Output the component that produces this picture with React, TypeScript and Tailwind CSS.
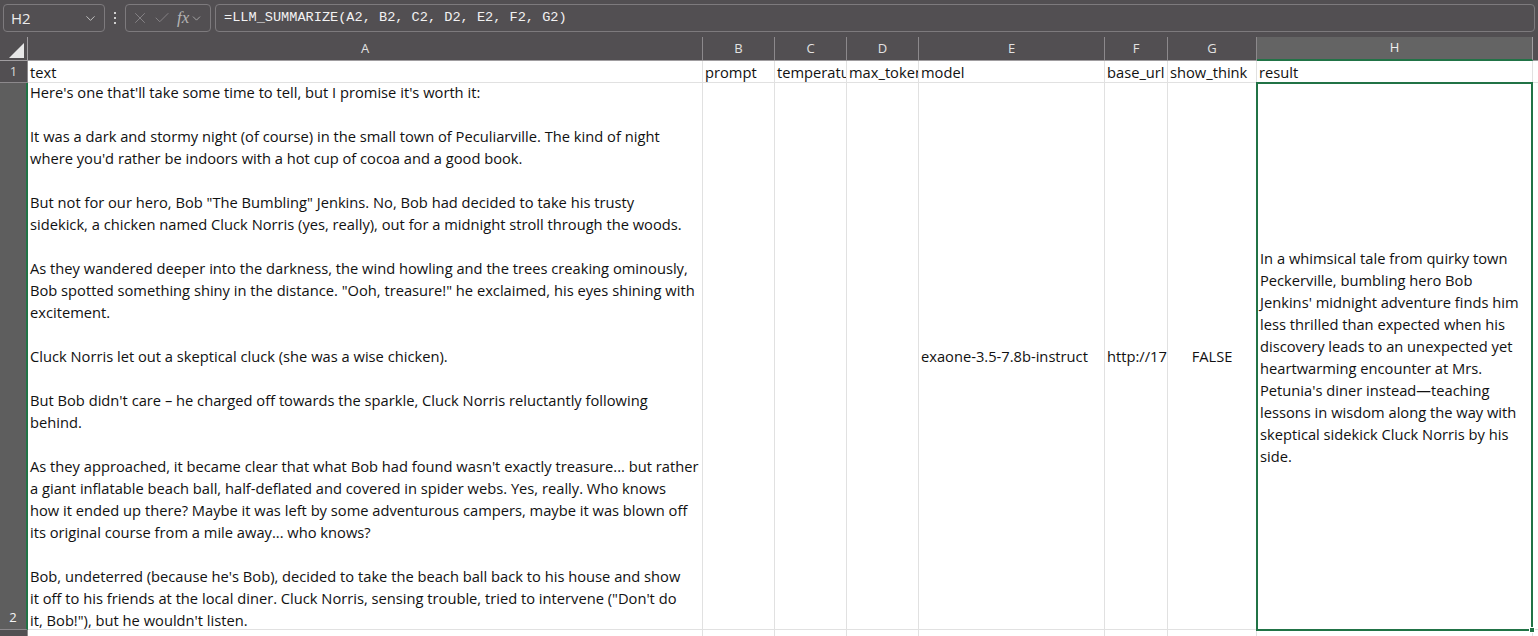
import { ChevronDown, X, Check } from "lucide-react";

const cols = [
  { key: "A", w: 675 },
  { key: "B", w: 72 },
  { key: "C", w: 72 },
  { key: "D", w: 72 },
  { key: "E", w: 186 },
  { key: "F", w: 63 },
  { key: "G", w: 89 },
  { key: "H", w: 276 },
];

const storyLines = [
  "Here's one that'll take some time to tell, but I promise it's worth it:",
  "",
  "It was a dark and stormy night (of course) in the small town of Peculiarville. The kind of night",
  "where you'd rather be indoors with a hot cup of cocoa and a good book.",
  "",
  'But not for our hero, Bob "The Bumbling" Jenkins. No, Bob had decided to take his trusty',
  "sidekick, a chicken named Cluck Norris (yes, really), out for a midnight stroll through the woods.",
  "",
  "As they wandered deeper into the darkness, the wind howling and the trees creaking ominously,",
  'Bob spotted something shiny in the distance. "Ooh, treasure!" he exclaimed, his eyes shining with',
  "excitement.",
  "",
  "Cluck Norris let out a skeptical cluck (she was a wise chicken).",
  "",
  "But Bob didn't care – he charged off towards the sparkle, Cluck Norris reluctantly following",
  "behind.",
  "",
  "As they approached, it became clear that what Bob had found wasn't exactly treasure... but rather",
  "a giant inflatable beach ball, half-deflated and covered in spider webs. Yes, really. Who knows",
  "how it ended up there? Maybe it was left by some adventurous campers, maybe it was blown off",
  "its original course from a mile away... who knows?",
  "",
  "Bob, undeterred (because he's Bob), decided to take the beach ball back to his house and show",
  "it off to his friends at the local diner. Cluck Norris, sensing trouble, tried to intervene (\"Don't do",
  "it, Bob!\"), but he wouldn't listen.",
];

const resultLines = [
  "In a whimsical tale from quirky town",
  "Peckerville, bumbling hero Bob",
  "Jenkins' midnight adventure finds him",
  "less thrilled than expected when his",
  "discovery leads to an unexpected yet",
  "heartwarming encounter at Mrs.",
  "Petunia's diner instead—teaching",
  "lessons in wisdom along the way with",
  "skeptical sidekick Cluck Norris by his",
  "side.",
];

const header = ["text", "prompt", "temperature", "max_tokens", "model", "base_url", "show_think", "result"];

function FormulaBar() {
  return (
    <div className="flex h-[36px] items-center px-[3px] bg-[#524f52]">
      <div className="flex h-[28px] w-[102px] shrink-0 items-center justify-between rounded-[4px] border border-[#7d7a7d] pl-[7px] pr-[6px] text-[15px] text-[#ececec]">
        <span>H2</span>
        <ChevronDown size={15} strokeWidth={1.5} className="text-[#c8c8c8]" />
      </div>
      <div className="mx-[9px] flex flex-col gap-[3px]">
        <span className="h-[2px] w-[2px] bg-[#cfcfcf]" />
        <span className="h-[2px] w-[2px] bg-[#cfcfcf]" />
        <span className="h-[2px] w-[2px] bg-[#cfcfcf]" />
      </div>
      <div className="flex h-[28px] w-[86px] shrink-0 items-center rounded-[4px] border border-[#7d7a7d] pl-[5px] text-[#8a878a]">
        <X size={18} strokeWidth={1.2} />
        <Check size={18} strokeWidth={1.2} className="ml-[4px]" />
        <span className="ml-[6px] font-['Liberation_Serif',serif] text-[17px] italic text-[#b4b4b4]">fx</span>
        <ChevronDown size={13} strokeWidth={1.5} className="ml-[1px] text-[#b4b4b4]" />
      </div>
      <div className="ml-[4px] flex h-[28px] flex-1 items-center rounded-[4px] border border-[#7d7a7d] pl-[8px] font-['Liberation_Mono',monospace] text-[13.6px] text-[#f2f2f2]">
        =LLM_SUMMARIZE(A2, B2, C2, D2, E2, F2, G2)
      </div>
    </div>
  );
}

function ColumnHeaders() {
  return (
    <div className="flex h-[25px] border-b border-[#a09da0] bg-[#524f52] pt-[1px]">
      <div className="relative w-[28px] shrink-0 border-r border-[#a09da0]">
        <svg className="absolute bottom-[2px] right-[3px]" width="15" height="15" viewBox="0 0 15 15">
          <polygon points="15,0 15,15 0,15" fill="#e8e8e8" />
        </svg>
      </div>
      {cols.map((c) => (
        <div
          key={c.key}
          style={{ width: c.w }}
          className={
            c.key === "H"
              ? "flex shrink-0 items-center justify-center border-b-2 border-r border-b-[#217346] border-r-[#a09da0] bg-[#646464] text-[13px] text-[#f0f0f0] -mb-[1px]"
              : "flex shrink-0 items-center justify-center border-r border-[#8c898c] text-[13px] text-[#e2e2e2]"
          }
        >
          {c.key}
        </div>
      ))}
      <div className="flex-1" />
    </div>
  );
}

export default function App() {
  return (
    <div className="h-[636px] w-[1538px] overflow-hidden bg-white font-['Open_Sans',sans-serif]">
      <FormulaBar />
      <ColumnHeaders />
      {/* row 1 */}
      <div className="flex h-[22px] text-[14.7px] text-[#111]">
        <div className="flex w-[28px] shrink-0 items-center justify-center border-b border-r border-[#8c898c] bg-[#524f52] text-[13px] text-[#d8d8d8]">
          1
        </div>
        {cols.map((c, i) => (
          <div
            key={c.key}
            style={{ width: c.w }}
            className="flex shrink-0 items-center overflow-hidden whitespace-nowrap border-b border-r border-[#e1e1e1] pl-[2px] pt-[1px]"
          >
            {header[i]}
          </div>
        ))}
        <div className="flex-1 border-b border-[#e1e1e1]" />
      </div>
      {/* row 2 */}
      <div className="flex h-[547px] text-[14.7px] leading-[22px] text-[#111]">
        <div className="flex w-[28px] shrink-0 items-end justify-center border-b border-r-2 border-b-[#8c898c] border-r-[#217346] bg-[#5e5e5e] pb-[1px] text-[13px] text-[#f4f4f4]">
          2
        </div>
        <div style={{ width: 675 }} className="shrink-0 overflow-hidden whitespace-nowrap border-b border-r border-[#e1e1e1] pl-[2px] -mt-[2px]">
          {storyLines.map((l, i) => (
            <div key={i} className="h-[22px]">
              {l}
            </div>
          ))}
        </div>
        <div style={{ width: 72 }} className="shrink-0 border-b border-r border-[#e1e1e1]" />
        <div style={{ width: 72 }} className="shrink-0 border-b border-r border-[#e1e1e1]" />
        <div style={{ width: 72 }} className="shrink-0 border-b border-r border-[#e1e1e1]" />
        <div style={{ width: 186 }} className="flex shrink-0 items-center whitespace-nowrap border-b border-r border-[#e1e1e1] pl-[2px]">
          exaone-3.5-7.8b-instruct
        </div>
        <div style={{ width: 63 }} className="flex shrink-0 items-center overflow-hidden whitespace-nowrap border-b border-r border-[#e1e1e1] pl-[2px]">
          http://172.0.0.1
        </div>
        <div style={{ width: 89 }} className="flex shrink-0 items-center justify-center border-b border-r border-[#e1e1e1]">
          FALSE
        </div>
        <div style={{ width: 277 }} className="relative flex h-[549px] shrink-0 flex-col justify-center whitespace-nowrap border-2 border-[#217346] pl-[2px] -mt-[1px] -ml-[1px]">
          {resultLines.map((l, i) => (
            <div key={i} className="h-[22px]">
              {l}
            </div>
          ))}
          <span className="absolute -bottom-[4px] -right-[4px] h-[6px] w-[6px] border border-white bg-[#217346]" />
        </div>
        <div className="flex-1 border-b border-[#e1e1e1]" />
      </div>
      {/* row 3 */}
      <div className="flex h-[22px]">
        <div className="w-[28px] shrink-0 border-r border-[#8c898c] bg-[#524f52]" />
        {cols.map((c) => (
          <div key={c.key} style={{ width: c.w }} className="shrink-0 border-r border-[#e1e1e1]" />
        ))}
      </div>
    </div>
  );
}
